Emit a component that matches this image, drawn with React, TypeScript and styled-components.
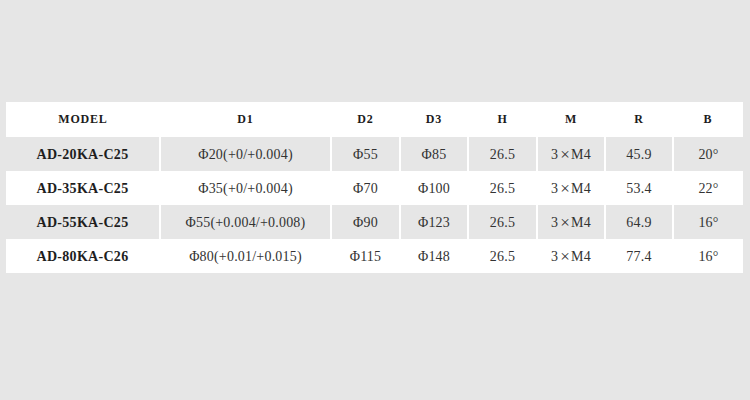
import styled, {createGlobalStyle} from "styled-components";

const GlobalStyle = createGlobalStyle`
    html, body {
        margin: 0;
        padding: 0;
        background: #e6e6e6;
    }
`;

const Page = styled.div`
    width: 750px;
    height: 400px;
    padding: 102px 7px 0 6px;
    box-sizing: border-box;
    font-family: "Liberation Serif", "Times New Roman", serif;
    color: #2b2b2b;
`;

const Table = styled.table`
    width: 737px;
    border-collapse: collapse;
    table-layout: fixed;
`;

const Row = styled.tr<{ $shaded?: boolean }>`
    background: ${({$shaded}) => ($shaded ? "#e6e6e6" : "#ffffff")};
    height: 34px;
`;

const HeadRow = styled.tr`
    background: #ffffff;
    height: 35px;
`;

const HeadCell = styled.th`
    font-size: 12px;
    font-weight: bold;
    letter-spacing: 0.8px;
    text-align: center;
    vertical-align: middle;
    padding: 0 0 1px;
    color: #1c1c1c;
`;

const Cell = styled.td<{ $bold?: boolean }>`
    font-size: 14px;
    font-weight: ${({$bold}) => ($bold ? "bold" : "normal")};
    letter-spacing: ${({$bold}) => ($bold ? "0.3px" : "0.2px")};
    text-align: center;
    vertical-align: middle;
    padding: 1px 0 0;
    border-left: 2px solid #ffffff;
    color: ${({$bold}) => ($bold ? "#1e1e1e" : "#333")};

    &:first-child {
        border-left: none;
    }
`;

const Times = styled.span`
    display: inline-block;
    margin: 0 1px 0 2px;
    font-size: 17px;
    line-height: 14px;
    transform: translateY(1px);
`;

const widths = [154, 171, 69, 68, 69, 68, 68, 70];
const headers = ["MODEL", "D1", "D2", "D3", "H", "M", "R", "B"];

const rows = [
    ["AD-20KA-C25", "Φ20(+0/+0.004)", "Φ55", "Φ85", "26.5", "3×M4", "45.9", "20°"],
    ["AD-35KA-C25", "Φ35(+0/+0.004)", "Φ70", "Φ100", "26.5", "3×M4", "53.4", "22°"],
    ["AD-55KA-C25", "Φ55(+0.004/+0.008)", "Φ90", "Φ123", "26.5", "3×M4", "64.9", "16°"],
    ["AD-80KA-C26", "Φ80(+0.01/+0.015)", "Φ115", "Φ148", "26.5", "3×M4", "77.4", "16°"],
];

// splits "3×M4" so the multiplication sign gets its own spacing
function renderValue(v: string) {
    if (!v.includes("×")) return v;
    const [a, b] = v.split("×");
    return (
        <>
            {a}<Times>×</Times>{b}
        </>
    );
}

export default function App() {
    return (
        <Page>
            <GlobalStyle/>
            <Table>
                <colgroup>
                    {widths.map((w, i) => (
                        <col key={i} style={{width: w}}/>
                    ))}
                </colgroup>
                <thead>
                <HeadRow>
                    {headers.map((h) => (
                        <HeadCell key={h}>{h}</HeadCell>
                    ))}
                </HeadRow>
                </thead>
                <tbody>
                {rows.map((r, i) => (
                    <Row key={r[0]} $shaded={i % 2 === 0}>
                        {r.map((c, j) => (
                            <Cell key={j} $bold={j === 0}>{renderValue(c)}</Cell>
                        ))}
                    </Row>
                ))}
                </tbody>
            </Table>
        </Page>
    );
}
